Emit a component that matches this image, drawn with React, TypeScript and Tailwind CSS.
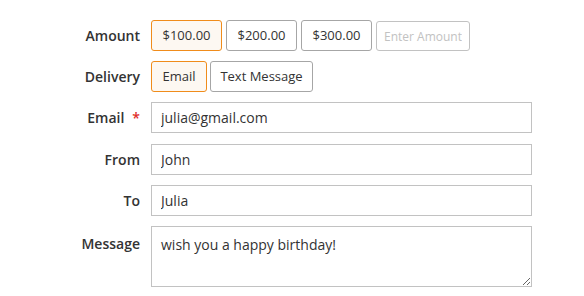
import React from 'react';

const font = { fontFamily: '"Open Sans", Arial, sans-serif' };

const Label: React.FC<{ text: string; required?: boolean; top?: boolean }> = ({ text, required, top }) => (
  <div className={`w-[140px] shrink-0 text-right text-[14px] font-semibold text-[#333] ${top ? 'self-start pt-[7px]' : ''}`}>
    {text}
    {required && <span className="ml-[8px] text-[#e02b27]">*</span>}
  </div>
);

const Option: React.FC<{ text: string; active?: boolean; width: string }> = ({ text, active, width }) => (
  <button
    className={`h-[31px] rounded-[3px] border px-0 text-[13px] text-[#333] ${width} ${
      active ? 'border-[#f08c1b] bg-[#fdf8f2]' : 'border-[#a6a6a6] bg-white'
    }`}
  >
    {text}
  </button>
);

const inputCls = 'h-[31px] w-[381px] border border-[#c2c2c2] px-[9px] text-[14px] text-[#333] outline-none';

export default function App() {
  const amounts = ['$100.00', '$200.00', '$300.00'];
  return (
    <div className="min-h-[296px] w-[584px] bg-white pt-[20px]" style={font}>
      <div className="flex flex-col gap-[10px]">
        <div className="flex items-center gap-[11px]">
          <Label text="Amount" />
          <div className="flex items-center gap-[4px]">
            {amounts.map((a, i) => (
              <Option key={a} text={a} active={i === 0} width="w-[71px]" />
            ))}
            <input
              placeholder="Enter Amount"
              className="mt-[1px] h-[30px] w-[94px] rounded-[3px] border border-[#c2c2c2] px-[7px] text-[12px] outline-none placeholder:text-[#c2c2c2]"
            />
          </div>
        </div>
        <div className="flex items-center gap-[11px]">
          <Label text="Delivery" />
          <div className="flex items-center gap-[3px]">
            <Option text="Email" active width="w-[56px]" />
            <Option text="Text Message" width="w-[103px]" />
          </div>
        </div>
        <div className="flex items-center gap-[11px]">
          <Label text="Email" required />
          <input defaultValue="julia@gmail.com" className={inputCls} />
        </div>
        <div className="mt-[1px] flex items-center gap-[11px]">
          <Label text="From" />
          <input defaultValue="John" className={inputCls} />
        </div>
        <div className="flex items-center gap-[11px]">
          <Label text="To" />
          <input defaultValue="Julia" className={inputCls} />
        </div>
        <div className="flex items-start gap-[11px]">
          <Label text="Message" top />
          <textarea
            defaultValue="wish you a happy birthday!"
            className="block h-[61px] w-[381px] border border-[#c2c2c2] px-[9px] pt-[7px] text-[14px] text-[#333] outline-none"
          />
        </div>
      </div>
    </div>
  );
}
